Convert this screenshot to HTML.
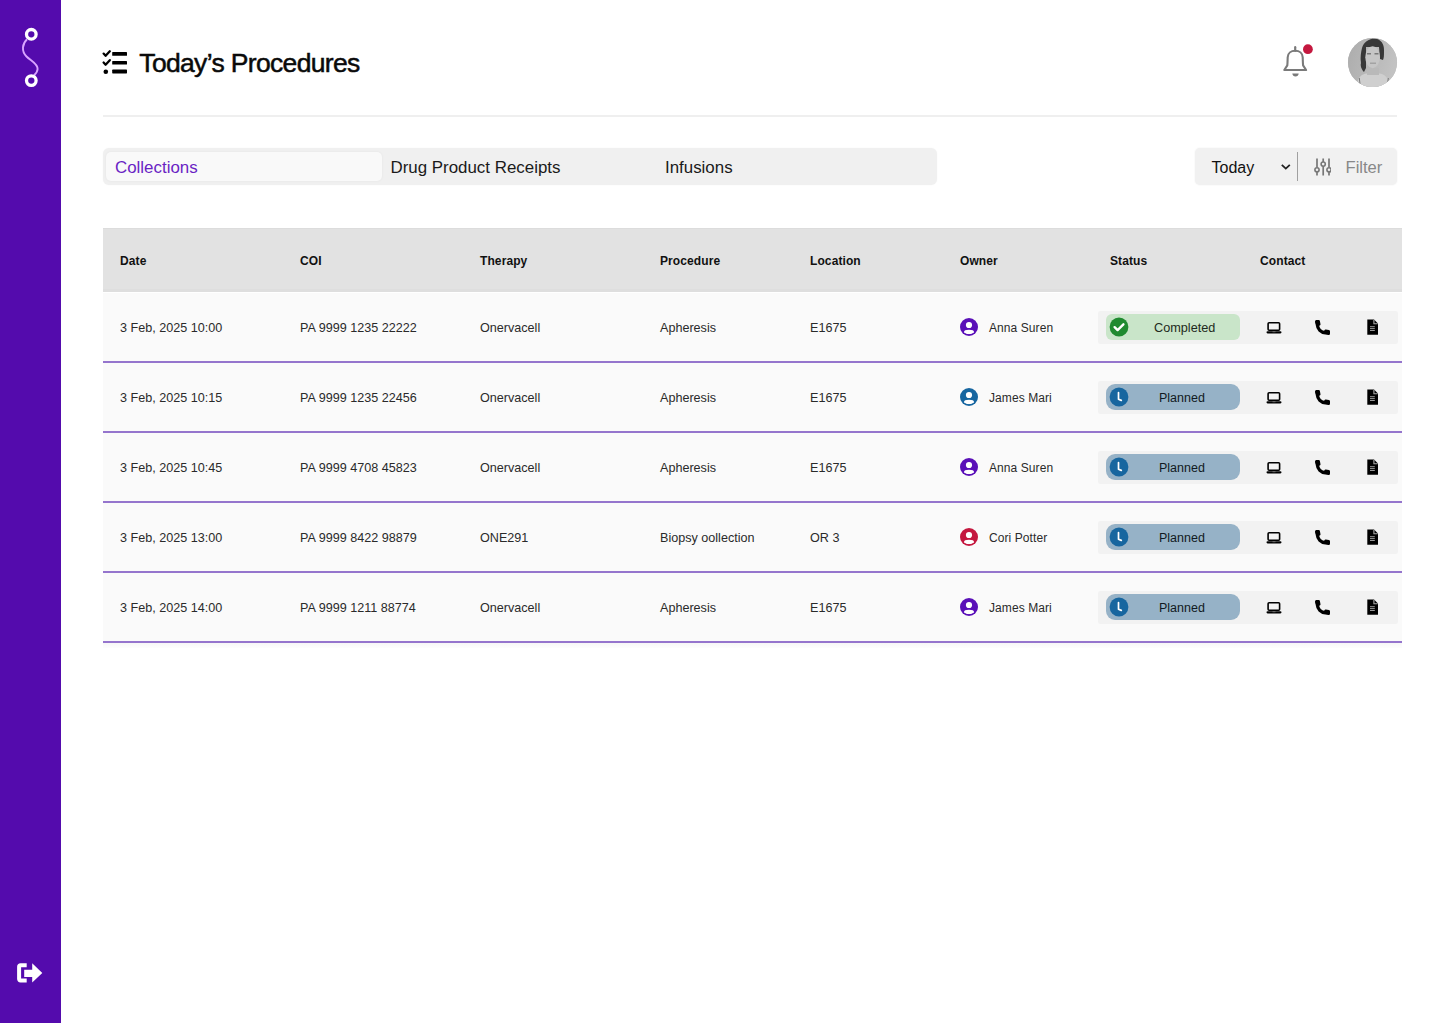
<!DOCTYPE html>
<html><head><meta charset="utf-8">
<style>
*{box-sizing:border-box;margin:0;padding:0}
html,body{width:1438px;height:1023px;overflow:hidden;background:#fff;font-family:"Liberation Sans",sans-serif;color:#1a1a1a}
svg{display:block}
#side{position:absolute;left:0;top:0;width:61px;height:1023px;background:#540bad}
#side svg{position:absolute}
.title{position:absolute;left:139.3px;top:47.7px;font-size:26.5px;letter-spacing:-0.66px;line-height:30px;color:#0a0a0a;white-space:nowrap;-webkit-text-stroke:0.5px #0a0a0a}
.ticon{position:absolute;left:100px;top:47px}
.hdiv{position:absolute;left:103px;top:115px;width:1294px;height:2px;background:#efefef}
.bell{position:absolute;left:1279px;top:42px}
.avatar{position:absolute;left:1347.5px;top:37.5px;width:49.5px;height:49.5px;border-radius:50%;overflow:hidden;background:#b5b5b5}
.tabs{position:absolute;left:103px;top:148px;width:834px;height:37px;background:#f0f0f0;border-radius:6px;box-shadow:0 0 1.5px rgba(0,0,0,0.05)}
.tab{position:absolute;top:4px;height:29px;width:276px;font-size:16.9px;line-height:31.6px;padding-left:9px;white-space:nowrap;color:#1a1a1a}
.tab.active{background:#f9f9f9;border-radius:5px;color:#6a1fc4;box-shadow:0 0 3px rgba(0,0,0,0.05)}
.ctrl{position:absolute;left:1195px;top:148px;width:202px;height:37px;background:#f1f1f1;border-radius:5px;box-shadow:0 0 2px rgba(0,0,0,0.07)}
.ctrl .t{position:absolute;left:16.5px;top:0;font-size:16px;line-height:39px;color:#111}
.ctrl .f{position:absolute;left:150.5px;top:0;font-size:16.6px;line-height:39px;color:#888}
.ctrl svg{position:absolute}
.vdiv{position:absolute;left:102px;top:4px;width:1px;height:29px;background:#a0a0a0}
.thead{position:absolute;left:103px;top:228px;width:1299px;height:64px;background:#e2e2e2;border-bottom:3px solid #dedede;box-shadow:inset 0 1px 0 #dcdcdc}
.th{position:absolute;top:1px;font-size:12px;font-weight:700;line-height:65px;color:#111;letter-spacing:0.1px;white-space:nowrap}
.row{position:absolute;left:103px;width:1299px;height:70px;background:#fafafa;border-bottom:2px solid #9575cd}
.td{position:absolute;top:1px;font-size:12.6px;line-height:68px;color:#2a2a2a;white-space:nowrap}
.owner{position:absolute;top:0;height:68px}
.ava{position:absolute;left:0;top:25px}
.oname{position:absolute;left:29px;top:0;font-size:12px;line-height:70px;color:#2a2a2a;letter-spacing:0.08px;white-space:nowrap}
.sc{position:absolute;left:995px;top:18px;width:300px;height:33px;background:#f2f2f2;border-radius:2px}
.ic{position:absolute}
.pill{position:absolute;left:8px;top:3px;width:134px;height:26px;border-radius:7px}
.pill.done{background:#c9e5c9;border-radius:6px}
.pill.plan{background:#96b2c7;border-radius:9px}
.pic{position:absolute;left:3px;top:3px}
.ptxt{position:absolute;top:0;font-size:12.5px;line-height:28px;color:#1e2a20;white-space:nowrap}
.plan .ptxt{color:#111a22}
</style></head><body>
<div id="side">
  <svg style="left:0;top:0" width="61" height="100" viewBox="0 0 61 100">
    <path d="M27 39.3C22.5 43.5 21 51 26.5 56.5C31 61 37.8 63.5 37.6 69C37.5 72 35.5 74 34 75.5" fill="none" stroke="#d9a4ff" stroke-width="1.9"/>
    <circle cx="31.3" cy="34.3" r="4.8" fill="#540bad" stroke="#fff" stroke-width="3.3"/>
    <circle cx="31.3" cy="80.6" r="4.8" fill="#540bad" stroke="#fff" stroke-width="3.3"/>
  </svg>
  <svg style="left:15px;top:960px" width="30" height="26" viewBox="0 0 30 26">
    <path d="M11.7 3.3H5.5C3.5 3.3 2.1 4.7 2.1 6.7V19C2.1 21 3.5 22.4 5.5 22.4H11.7V18.4H6.1V7.3H11.7Z" fill="#fff"/>
    <path d="M9.2 9.8H17.2V3.3L27.3 12.9L17.2 22.4V16.9H9.2Z" fill="#fff"/>
  </svg>
</div>
<svg class="ticon" width="30" height="30" viewBox="0 0 30 30">
  <path d="M3.6 6.6L5.6 8.8L9.8 4.3" fill="none" stroke="#000" stroke-width="2.3" stroke-linecap="round" stroke-linejoin="round"/>
  <path d="M3.6 15.5L5.6 17.7L9.8 13.2" fill="none" stroke="#000" stroke-width="2.3" stroke-linecap="round" stroke-linejoin="round"/>
  <circle cx="5.8" cy="24.7" r="2.3" fill="#000"/>
  <rect x="12.2" y="5" width="14.8" height="3.8" rx="0.6" fill="#000"/>
  <rect x="12.2" y="14" width="14.8" height="3.6" rx="0.6" fill="#000"/>
  <rect x="12.2" y="22.6" width="14.8" height="3.8" rx="0.6" fill="#000"/>
</svg>
<div class="title">Today’s Procedures</div>
<svg class="bell" width="34" height="38" viewBox="1279 42 34 38">
  <path d="M1295.2 47.2V50.8" stroke="#7a7a7a" stroke-width="2.2" stroke-linecap="round"/>
  <path d="M1284.3 70L1287.3 65.4C1287.6 62.5 1287.6 59.5 1287.7 57.2C1287.9 53.2 1291 50.8 1295.2 50.8C1299.4 50.8 1302.5 53.2 1302.7 57.2C1302.8 59.5 1302.8 62.5 1303.1 65.4L1306.1 70Z" fill="none" stroke="#7a7a7a" stroke-width="2.1" stroke-linejoin="round"/>
  <path d="M1292.3 73.6C1292.5 75.6 1293.7 76.6 1295.5 76.6C1297.3 76.6 1298.5 75.6 1298.7 73.6Z" fill="#7a7a7a"/>
  <circle cx="1307.9" cy="49.2" r="4.9" fill="#c4183f"/>
</svg>
<div class="avatar">
  <svg width="50" height="50" viewBox="0 0 50 50">
    <defs><linearGradient id="bg" x1="0" y1="0" x2="1" y2="0.3"><stop offset="0" stop-color="#acacac"/><stop offset="1" stop-color="#c2c2c2"/></linearGradient>
    <filter id="bl"><feGaussianBlur stdDeviation="0.45"/></filter></defs>
    <rect width="50" height="50" fill="url(#bg)"/>
    <g filter="url(#bl)">
    <path d="M9 50C9 42 11 37 18 35.5L25 35L32 35.5C39 37 41 42 42 50Z" fill="#cfcfcf"/>
    <path d="M19 30L31 30L31 37L19 37Z" fill="#b9b9b9"/>
    <path d="M14 10C16 3 22 0.5 27 0.8C33 1.2 36 6 36 12C36 17 36 20 35 22L32 21L31 9L18 9L18 30L16 34C14 32 12 28 13 25C12 20 13 14 14 10Z" fill="#383838"/>
    <ellipse cx="24.6" cy="19.3" rx="7.3" ry="11" fill="#c6c6c6"/>
    <path d="M19 15.8H23M26.5 15.8H30.5" stroke="#7a7a7a" stroke-width="1.5"/>
    <path d="M22 25.2H28" stroke="#9a9a9a" stroke-width="1.2"/>
    <path d="M11.3 40L12.5 50M40.3 40L39 50" stroke="#7a7a7a" stroke-width="1"/>
    </g>
  </svg>
</div>
<div class="hdiv"></div>
<div class="tabs">
  <div class="tab active" style="left:3px">Collections</div>
  <div class="tab" style="left:278.5px">Drug Product Receipts</div>
  <div class="tab" style="left:553px">Infusions</div>
</div>
<div class="ctrl">
  <div class="t">Today</div>
  <svg style="left:85px;top:15px" width="12" height="8" viewBox="0 0 12 8"><path d="M1.8 1.8L5.8 5.6L9.8 1.8" fill="none" stroke="#222" stroke-width="1.8"/></svg>
  <div class="vdiv"></div>
  <svg style="left:116px;top:1px" width="20" height="30" viewBox="1311 149 20 30">
    <g stroke="#777" stroke-width="1.7" fill="none">
      <path d="M1317 158.4V167.6M1317 172V175.6"/>
      <path d="M1323.2 158.4V162M1323.2 166.3V175.6"/>
      <path d="M1329 158.4V167.6M1329 172V175.6"/>
      <circle cx="1317" cy="169.8" r="2.1" stroke-width="1.6"/>
      <circle cx="1323.2" cy="164.1" r="2.1" stroke-width="1.6"/>
      <circle cx="1329" cy="169.8" r="2.1" stroke-width="1.6"/>
    </g>
  </svg>
  <div class="f">Filter</div>
</div>
<div class="thead">
  <div class="th" style="left:17px">Date</div>
  <div class="th" style="left:197px">COI</div>
  <div class="th" style="left:377px">Therapy</div>
  <div class="th" style="left:557px">Procedure</div>
  <div class="th" style="left:707px">Location</div>
  <div class="th" style="left:857px">Owner</div>
  <div class="th" style="left:1007px">Status</div>
  <div class="th" style="left:1157px">Contact</div>
</div>
<div style="position:absolute;left:103px;top:643px;width:1299px;height:5px;background:linear-gradient(#f7f7f7,#fdfdfd)"></div>
<div class="row" style="top:293px"><div class="td" style="left:17px">3 Feb, 2025 10:00</div><div class="td" style="left:197px">PA 9999 1235 22222</div><div class="td" style="left:377px">Onervacell</div><div class="td" style="left:557px">Apheresis</div><div class="td" style="left:707px">E1675</div><div class="owner" style="left:857px"><svg class="ava" width="18" height="18" viewBox="0 0 18 18"><defs><clipPath id="c5a10b8"><circle cx="9" cy="9" r="7.3"/></clipPath></defs><circle cx="9" cy="9" r="9" fill="#5a10b8"/><circle cx="9" cy="7" r="3.1" fill="#fff"/><ellipse cx="9" cy="14" rx="5" ry="2.3" fill="#fff" clip-path="url(#c5a10b8)"/></svg><span class="oname">Anna Suren</span></div><div class="sc"><div class="pill done"><svg class="pic" width="20" height="20" viewBox="0 0 20 20"><circle cx="10" cy="10" r="9.4" fill="#1f8a30"/><path d="M5.6 10.2L8.6 13.1L14.4 7.3" fill="none" stroke="#fff" stroke-width="2.4" stroke-linecap="round" stroke-linejoin="round"/></svg><span class="ptxt" style="left:48px;font-size:12.7px">Completed</span></div><svg class="ic" style="left:168px;top:11px" width="16" height="12" viewBox="0 0 16 12"><rect x="2.1" y="0.8" width="11.5" height="7.4" rx="1" fill="none" stroke="#000" stroke-width="1.6"/><rect x="0.5" y="9.2" width="15" height="2.2" rx="1.1" fill="#000"/><rect x="6.5" y="9.3" width="3" height="0.9" fill="#777"/></svg><svg class="ic" style="left:216px;top:8px" width="17" height="17" viewBox="0 0 17 17"><path d="M3.3 5.5C3.6 10 7 13.4 11.5 13.7" fill="none" stroke="#000" stroke-width="3.4"/><path d="M1 2.6C1 1.6 1.7 0.9 2.6 0.9H4.6C5.3 0.9 5.8 1.3 5.9 2L6.5 5.2C6.6 5.8 6.3 6.3 5.8 6.6L3.2 7.2C1.8 6.5 1 4.5 1 2.6Z" fill="#000"/><path d="M14.4 16C15.4 16 16 15.3 16 14.4V12.4C16 11.7 15.6 11.2 14.9 11.1L11.8 10.5C11.2 10.4 10.7 10.7 10.4 11.2L9.8 13.8C10.5 15.2 12.5 16 14.4 16Z" fill="#000"/></svg><svg class="ic" style="left:268.5px;top:8px" width="12" height="16" viewBox="0 0 12 16"><path d="M0.3 0.6H7L11 4.4V15.8H0.3Z" fill="#000"/><path d="M6.9 1V4.7H10.6" fill="none" stroke="#aaa" stroke-width="1.1"/><rect x="3" y="7.2" width="4.8" height="1" fill="#999"/><rect x="3" y="9.1" width="4.8" height="1" fill="#999"/><rect x="3" y="11" width="4.8" height="1" fill="#999"/></svg></div></div>
<div class="row" style="top:363px"><div class="td" style="left:17px">3 Feb, 2025 10:15</div><div class="td" style="left:197px">PA 9999 1235 22456</div><div class="td" style="left:377px">Onervacell</div><div class="td" style="left:557px">Apheresis</div><div class="td" style="left:707px">E1675</div><div class="owner" style="left:857px"><svg class="ava" width="18" height="18" viewBox="0 0 18 18"><defs><clipPath id="c1766a0"><circle cx="9" cy="9" r="7.3"/></clipPath></defs><circle cx="9" cy="9" r="9" fill="#1766a0"/><circle cx="9" cy="7" r="3.1" fill="#fff"/><ellipse cx="9" cy="14" rx="5" ry="2.3" fill="#fff" clip-path="url(#c1766a0)"/></svg><span class="oname">James Mari</span></div><div class="sc"><div class="pill plan"><svg class="pic" width="20" height="20" viewBox="0 0 20 20"><circle cx="10" cy="10" r="9.4" fill="#17669f"/><path d="M9.5 5.6V12.2L12.3 13.4" fill="none" stroke="#fff" stroke-width="1.7" stroke-linecap="round" stroke-linejoin="round"/></svg><span class="ptxt" style="left:53px">Planned</span></div><svg class="ic" style="left:168px;top:11px" width="16" height="12" viewBox="0 0 16 12"><rect x="2.1" y="0.8" width="11.5" height="7.4" rx="1" fill="none" stroke="#000" stroke-width="1.6"/><rect x="0.5" y="9.2" width="15" height="2.2" rx="1.1" fill="#000"/><rect x="6.5" y="9.3" width="3" height="0.9" fill="#777"/></svg><svg class="ic" style="left:216px;top:8px" width="17" height="17" viewBox="0 0 17 17"><path d="M3.3 5.5C3.6 10 7 13.4 11.5 13.7" fill="none" stroke="#000" stroke-width="3.4"/><path d="M1 2.6C1 1.6 1.7 0.9 2.6 0.9H4.6C5.3 0.9 5.8 1.3 5.9 2L6.5 5.2C6.6 5.8 6.3 6.3 5.8 6.6L3.2 7.2C1.8 6.5 1 4.5 1 2.6Z" fill="#000"/><path d="M14.4 16C15.4 16 16 15.3 16 14.4V12.4C16 11.7 15.6 11.2 14.9 11.1L11.8 10.5C11.2 10.4 10.7 10.7 10.4 11.2L9.8 13.8C10.5 15.2 12.5 16 14.4 16Z" fill="#000"/></svg><svg class="ic" style="left:268.5px;top:8px" width="12" height="16" viewBox="0 0 12 16"><path d="M0.3 0.6H7L11 4.4V15.8H0.3Z" fill="#000"/><path d="M6.9 1V4.7H10.6" fill="none" stroke="#aaa" stroke-width="1.1"/><rect x="3" y="7.2" width="4.8" height="1" fill="#999"/><rect x="3" y="9.1" width="4.8" height="1" fill="#999"/><rect x="3" y="11" width="4.8" height="1" fill="#999"/></svg></div></div>
<div class="row" style="top:433px"><div class="td" style="left:17px">3 Feb, 2025 10:45</div><div class="td" style="left:197px">PA 9999 4708 45823</div><div class="td" style="left:377px">Onervacell</div><div class="td" style="left:557px">Apheresis</div><div class="td" style="left:707px">E1675</div><div class="owner" style="left:857px"><svg class="ava" width="18" height="18" viewBox="0 0 18 18"><defs><clipPath id="c5a10b8"><circle cx="9" cy="9" r="7.3"/></clipPath></defs><circle cx="9" cy="9" r="9" fill="#5a10b8"/><circle cx="9" cy="7" r="3.1" fill="#fff"/><ellipse cx="9" cy="14" rx="5" ry="2.3" fill="#fff" clip-path="url(#c5a10b8)"/></svg><span class="oname">Anna Suren</span></div><div class="sc"><div class="pill plan"><svg class="pic" width="20" height="20" viewBox="0 0 20 20"><circle cx="10" cy="10" r="9.4" fill="#17669f"/><path d="M9.5 5.6V12.2L12.3 13.4" fill="none" stroke="#fff" stroke-width="1.7" stroke-linecap="round" stroke-linejoin="round"/></svg><span class="ptxt" style="left:53px">Planned</span></div><svg class="ic" style="left:168px;top:11px" width="16" height="12" viewBox="0 0 16 12"><rect x="2.1" y="0.8" width="11.5" height="7.4" rx="1" fill="none" stroke="#000" stroke-width="1.6"/><rect x="0.5" y="9.2" width="15" height="2.2" rx="1.1" fill="#000"/><rect x="6.5" y="9.3" width="3" height="0.9" fill="#777"/></svg><svg class="ic" style="left:216px;top:8px" width="17" height="17" viewBox="0 0 17 17"><path d="M3.3 5.5C3.6 10 7 13.4 11.5 13.7" fill="none" stroke="#000" stroke-width="3.4"/><path d="M1 2.6C1 1.6 1.7 0.9 2.6 0.9H4.6C5.3 0.9 5.8 1.3 5.9 2L6.5 5.2C6.6 5.8 6.3 6.3 5.8 6.6L3.2 7.2C1.8 6.5 1 4.5 1 2.6Z" fill="#000"/><path d="M14.4 16C15.4 16 16 15.3 16 14.4V12.4C16 11.7 15.6 11.2 14.9 11.1L11.8 10.5C11.2 10.4 10.7 10.7 10.4 11.2L9.8 13.8C10.5 15.2 12.5 16 14.4 16Z" fill="#000"/></svg><svg class="ic" style="left:268.5px;top:8px" width="12" height="16" viewBox="0 0 12 16"><path d="M0.3 0.6H7L11 4.4V15.8H0.3Z" fill="#000"/><path d="M6.9 1V4.7H10.6" fill="none" stroke="#aaa" stroke-width="1.1"/><rect x="3" y="7.2" width="4.8" height="1" fill="#999"/><rect x="3" y="9.1" width="4.8" height="1" fill="#999"/><rect x="3" y="11" width="4.8" height="1" fill="#999"/></svg></div></div>
<div class="row" style="top:503px"><div class="td" style="left:17px">3 Feb, 2025 13:00</div><div class="td" style="left:197px">PA 9999 8422 98879</div><div class="td" style="left:377px">ONE291</div><div class="td" style="left:557px">Biopsy oollection</div><div class="td" style="left:707px">OR 3</div><div class="owner" style="left:857px"><svg class="ava" width="18" height="18" viewBox="0 0 18 18"><defs><clipPath id="cc4183f"><circle cx="9" cy="9" r="7.3"/></clipPath></defs><circle cx="9" cy="9" r="9" fill="#c4183f"/><circle cx="9" cy="7" r="3.1" fill="#fff"/><ellipse cx="9" cy="14" rx="5" ry="2.3" fill="#fff" clip-path="url(#cc4183f)"/></svg><span class="oname">Cori Potter</span></div><div class="sc"><div class="pill plan"><svg class="pic" width="20" height="20" viewBox="0 0 20 20"><circle cx="10" cy="10" r="9.4" fill="#17669f"/><path d="M9.5 5.6V12.2L12.3 13.4" fill="none" stroke="#fff" stroke-width="1.7" stroke-linecap="round" stroke-linejoin="round"/></svg><span class="ptxt" style="left:53px">Planned</span></div><svg class="ic" style="left:168px;top:11px" width="16" height="12" viewBox="0 0 16 12"><rect x="2.1" y="0.8" width="11.5" height="7.4" rx="1" fill="none" stroke="#000" stroke-width="1.6"/><rect x="0.5" y="9.2" width="15" height="2.2" rx="1.1" fill="#000"/><rect x="6.5" y="9.3" width="3" height="0.9" fill="#777"/></svg><svg class="ic" style="left:216px;top:8px" width="17" height="17" viewBox="0 0 17 17"><path d="M3.3 5.5C3.6 10 7 13.4 11.5 13.7" fill="none" stroke="#000" stroke-width="3.4"/><path d="M1 2.6C1 1.6 1.7 0.9 2.6 0.9H4.6C5.3 0.9 5.8 1.3 5.9 2L6.5 5.2C6.6 5.8 6.3 6.3 5.8 6.6L3.2 7.2C1.8 6.5 1 4.5 1 2.6Z" fill="#000"/><path d="M14.4 16C15.4 16 16 15.3 16 14.4V12.4C16 11.7 15.6 11.2 14.9 11.1L11.8 10.5C11.2 10.4 10.7 10.7 10.4 11.2L9.8 13.8C10.5 15.2 12.5 16 14.4 16Z" fill="#000"/></svg><svg class="ic" style="left:268.5px;top:8px" width="12" height="16" viewBox="0 0 12 16"><path d="M0.3 0.6H7L11 4.4V15.8H0.3Z" fill="#000"/><path d="M6.9 1V4.7H10.6" fill="none" stroke="#aaa" stroke-width="1.1"/><rect x="3" y="7.2" width="4.8" height="1" fill="#999"/><rect x="3" y="9.1" width="4.8" height="1" fill="#999"/><rect x="3" y="11" width="4.8" height="1" fill="#999"/></svg></div></div>
<div class="row" style="top:573px"><div class="td" style="left:17px">3 Feb, 2025 14:00</div><div class="td" style="left:197px">PA 9999 1211 88774</div><div class="td" style="left:377px">Onervacell</div><div class="td" style="left:557px">Apheresis</div><div class="td" style="left:707px">E1675</div><div class="owner" style="left:857px"><svg class="ava" width="18" height="18" viewBox="0 0 18 18"><defs><clipPath id="c5a10b8"><circle cx="9" cy="9" r="7.3"/></clipPath></defs><circle cx="9" cy="9" r="9" fill="#5a10b8"/><circle cx="9" cy="7" r="3.1" fill="#fff"/><ellipse cx="9" cy="14" rx="5" ry="2.3" fill="#fff" clip-path="url(#c5a10b8)"/></svg><span class="oname">James Mari</span></div><div class="sc"><div class="pill plan"><svg class="pic" width="20" height="20" viewBox="0 0 20 20"><circle cx="10" cy="10" r="9.4" fill="#17669f"/><path d="M9.5 5.6V12.2L12.3 13.4" fill="none" stroke="#fff" stroke-width="1.7" stroke-linecap="round" stroke-linejoin="round"/></svg><span class="ptxt" style="left:53px">Planned</span></div><svg class="ic" style="left:168px;top:11px" width="16" height="12" viewBox="0 0 16 12"><rect x="2.1" y="0.8" width="11.5" height="7.4" rx="1" fill="none" stroke="#000" stroke-width="1.6"/><rect x="0.5" y="9.2" width="15" height="2.2" rx="1.1" fill="#000"/><rect x="6.5" y="9.3" width="3" height="0.9" fill="#777"/></svg><svg class="ic" style="left:216px;top:8px" width="17" height="17" viewBox="0 0 17 17"><path d="M3.3 5.5C3.6 10 7 13.4 11.5 13.7" fill="none" stroke="#000" stroke-width="3.4"/><path d="M1 2.6C1 1.6 1.7 0.9 2.6 0.9H4.6C5.3 0.9 5.8 1.3 5.9 2L6.5 5.2C6.6 5.8 6.3 6.3 5.8 6.6L3.2 7.2C1.8 6.5 1 4.5 1 2.6Z" fill="#000"/><path d="M14.4 16C15.4 16 16 15.3 16 14.4V12.4C16 11.7 15.6 11.2 14.9 11.1L11.8 10.5C11.2 10.4 10.7 10.7 10.4 11.2L9.8 13.8C10.5 15.2 12.5 16 14.4 16Z" fill="#000"/></svg><svg class="ic" style="left:268.5px;top:8px" width="12" height="16" viewBox="0 0 12 16"><path d="M0.3 0.6H7L11 4.4V15.8H0.3Z" fill="#000"/><path d="M6.9 1V4.7H10.6" fill="none" stroke="#aaa" stroke-width="1.1"/><rect x="3" y="7.2" width="4.8" height="1" fill="#999"/><rect x="3" y="9.1" width="4.8" height="1" fill="#999"/><rect x="3" y="11" width="4.8" height="1" fill="#999"/></svg></div></div>
</body></html>
